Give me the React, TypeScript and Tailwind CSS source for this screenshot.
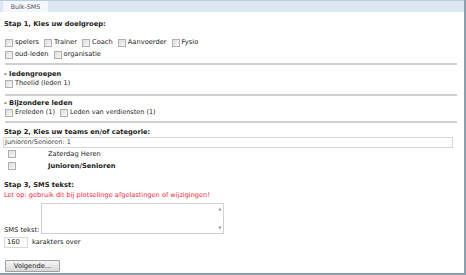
const font = { fontFamily: '"DejaVu Sans", Verdana, sans-serif' };

const Box = () => (
  <span className="inline-block w-[8px] h-[8px] border border-[#b0b0b0] bg-gradient-to-br from-[#dedede] to-[#f8f8f8] shrink-0" />
);

const Check = ({ label, small = false }: { label: string; small?: boolean }) => (
  <span className="inline-flex items-center gap-[2px] mr-[5px]">
    <Box />
    <span className={small ? "text-[6.5px]" : "text-[6.7px]"}>{label}</span>
  </span>
);

const Rule = ({ mt }: { mt: string }) => <div className={`h-[2px] bg-[#cfcfcf] ml-[2px] mr-[4px] ${mt}`} />;

const Heading = ({ children, mt }: { children: React.ReactNode; mt: string }) => (
  <div className={`h-[10px] leading-[10px] text-[6.7px] font-bold ml-[1px] ${mt}`}>{children}</div>
);

export default function App() {
  return (
    <div style={font} className="w-[466px] h-[275px] bg-white text-[#222] overflow-hidden">
      <div className="w-[466px] h-[275px] border-r-2 border-b-2 border-[#8aa0b0] flex flex-col">
        <div className="h-[12px] bg-[#dce7f3] border-t border-[#b9cde0] flex items-end shrink-0">
          <div className="ml-[3px] w-[45px] h-[11px] bg-[#f3f6fa] text-[6.3px] text-[#555] flex items-center justify-center">
            Bulk-SMS
          </div>
        </div>
        <div className="px-[3px] flex flex-col">
          <Heading mt="mt-[7px]">Stap 1, Kies uw doelgroep:</Heading>
          <div className="mt-[9px] ml-[2px] flex h-[9px] items-center">
            <Check label="spelers" />
            <Check label="Trainer" />
            <Check label="Coach" />
            <Check label="Aanvoerder" />
            <Check label="Fysio" />
          </div>
          <div className="mt-[3px] ml-[2px] flex h-[9px] items-center">
            <Check label="oud-leden" />
            <Check label="organisatie" />
          </div>
          <Rule mt="mt-[4px]" />

          <Heading mt="mt-[4px]">- ledengroepen</Heading>
          <div className="ml-[2px] flex h-[9px] items-center">
            <Check label="Theelid (leden 1)" small />
          </div>
          <Rule mt="mt-[6px]" />

          <Heading mt="mt-[2px]">- Bijzondere leden</Heading>
          <div className="ml-[2px] flex h-[9px] items-center">
            <Check label="Ereleden (1)" small />
            <Check label="Leden van verdiensten (1)" small />
          </div>
          <Rule mt="mt-[4px]" />

          <Heading mt="mt-[4px]">Stap 2, Kies uw teams en/of categorie:</Heading>
          <div className="mr-[8px] h-[11px] border border-[#d6d6d6] text-[6.5px] leading-[9px] pl-[1px] text-[#444]">
            Junioren/Senioren: 1
          </div>
          <div className="flex items-center mt-[1px] h-[10px]">
            <span className="w-[45px] pl-[5px] flex"><Box /></span>
            <span className="text-[6.7px]">Zaterdag Heren</span>
          </div>
          <div className="flex items-center mt-[2px] h-[10px]">
            <span className="w-[45px] pl-[5px] flex"><Box /></span>
            <span className="text-[6.7px] font-bold">Junioren/Senioren</span>
          </div>

          <Heading mt="mt-[9px]">Stap 3, SMS tekst:</Heading>
          <div className="h-[9px] text-[6.6px] text-[#e8263f] leading-[9px] ml-[1px] mt-[1px]">
            Let op: gebruik dit bij plotselinge afgelastingen of wijzigingen!
          </div>
          <div className="flex items-end mt-[3px] ml-[1px]">
            <span className="text-[6.7px] leading-[8px] mr-[2px]">SMS tekst:</span>
            <div className="w-[183px] h-[31px] border border-[#d0d0d0] flex justify-end">
              <div className="w-[7px] flex flex-col justify-between items-center text-[4px] text-[#999] py-[2px]">
                <span>▲</span>
                <span>▼</span>
              </div>
            </div>
          </div>
          <div className="flex items-center mt-[3px] ml-[1px]">
            <div className="w-[24px] h-[11px] border border-[#d8d8d8] text-[6.7px] leading-[9px] pl-[2px]">160</div>
            <span className="text-[6.7px] ml-[4px]">karakters over</span>
          </div>
          <div className="mt-[12px] ml-[2px]">
            <div className="w-[55px] h-[12px] border border-[#a0a0a0] rounded-[1px] bg-gradient-to-b from-[#f6f6f6] to-[#d8d8d8] text-[6.7px] leading-[10px] text-center">
              Volgende...
            </div>
          </div>
        </div>
      </div>
    </div>
  );
}
